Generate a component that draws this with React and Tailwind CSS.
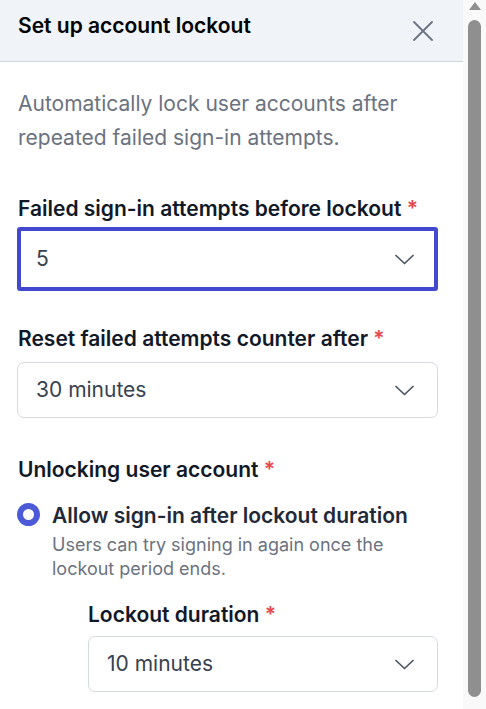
const font = { fontFamily: 'Inter, "Noto Sans", sans-serif' };

const Label = ({ children, className = '' }) => (
  <div className={`text-[21px] font-semibold text-[#111827] leading-[28px] ${className}`}>
    {children} <span className="text-[#e5484d]">*</span>
  </div>
);

const Chevron = () => (
  <svg width="19" height="11" viewBox="0 0 19 11" fill="none" className="text-[#4b5563]">
    <polyline points="1,1.5 9.5,9.5 18,1.5" stroke="currentColor" strokeWidth="1.7" strokeLinecap="round" strokeLinejoin="round" />
  </svg>
);

const Select = ({ value, focused, className = '' }) => (
  <div
    className={`flex items-center justify-between bg-white ${
      focused
        ? 'h-[64px] border-[4px] border-[#4349cf] rounded-[3px] pl-[15px] pr-[20px]'
        : 'h-[56px] border border-[#d5dae1] rounded-[7px] pl-[18px] pr-[23px]'
    } ${className}`}
  >
    <span className="text-[21px] text-[#374151] leading-[28px]">{value}</span>
    <Chevron />
  </div>
);

export default function App() {
  return (
    <div className="flex h-[709px] overflow-hidden bg-white" style={font}>
      {/* Panel */}
      <div className="flex-1 min-w-0">
        {/* Header */}
        <div className="h-[62px] bg-[#f0f3f8] border-b border-[#d1d5db] flex items-start justify-between pl-[18px] pr-[30px]">
          <h2 className="mt-[12px] text-[21px] font-semibold text-black leading-[28px]">
            Set up account lockout
          </h2>
          <button className="mt-[21px] text-[#6b7280]">
            <svg width="20" height="20" viewBox="0 0 20 20" fill="none">
              <path d="M1 1L19 19M19 1L1 19" stroke="currentColor" strokeWidth="1.8" strokeLinecap="round" />
            </svg>
          </button>
        </div>

        {/* Body */}
        <div className="pl-[17px] pr-[25px]">
          <p className="mt-[25px] pl-[1px] text-[21px] leading-[34px] text-[#6b7280]">
            Automatically lock user accounts after repeated failed sign-in attempts.
          </p>

          <Label className="mt-[40px] pl-[1px]">Failed sign-in attempts before lockout</Label>
          <Select value="5" focused className="mt-[4px]" />

          <Label className="mt-[34px] pl-[1px]">Reset failed attempts counter after</Label>
          <Select value="30 minutes" className="mt-[9px]" />

          <Label className="mt-[38px] pl-[1px]">Unlocking user account</Label>

          <div className="mt-[18px] flex items-start gap-[12px]">
            <div className="mt-[1px] w-[23px] h-[23px] rounded-full border-[6px] border-[#4c5ad8] bg-white shrink-0" />
            <div>
              <div className="text-[21px] font-semibold text-[#1f2937] leading-[28px]">
                Allow sign-in after lockout duration
              </div>
              <div className="mt-[3px] text-[18px] leading-[24px] text-[#6b7280]">
                Users can try signing in again once the lockout period ends.
              </div>
            </div>
          </div>

          <div className="pl-[71px]">
            <Label className="mt-[20px]">Lockout duration</Label>
            <Select value="10 minutes" className="mt-[7px]" />
          </div>
        </div>
      </div>

      {/* Scrollbar */}
      <div className="w-[23px] shrink-0 bg-[#f9f9f9] flex flex-col items-center">
        <svg width="14" height="10" viewBox="0 0 14 10" className="mt-[1px]">
          <polygon points="7,1 13,9 1,9" fill="#8f8f8f" />
        </svg>
        <div className="mt-[9px] w-[13px] h-[677px] rounded-full bg-[#8f8f8f]" />
      </div>
    </div>
  );
}
